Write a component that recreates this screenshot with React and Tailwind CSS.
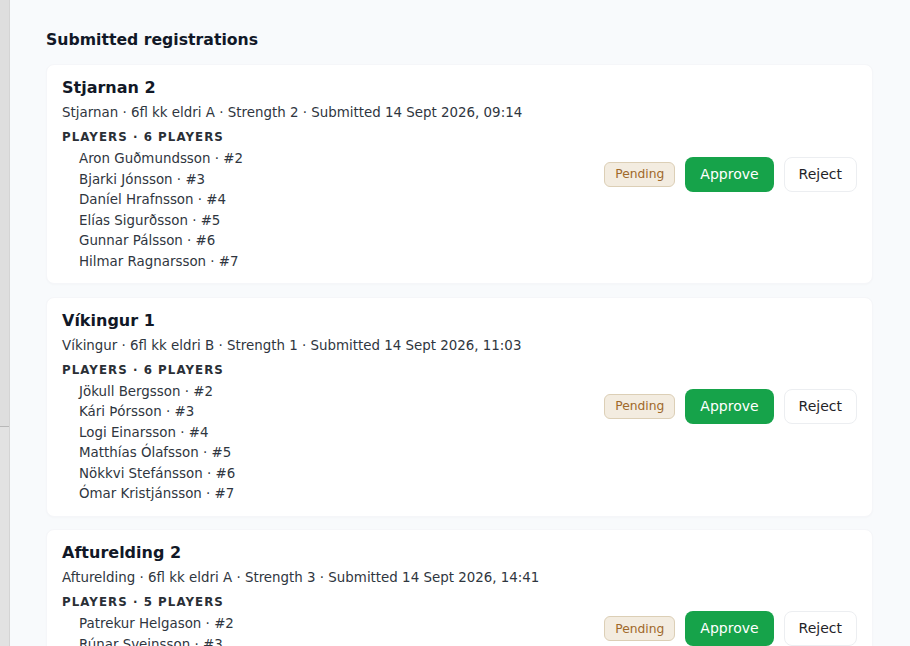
import React from 'react';

const registrations = [
  {
    team: 'Stjarnan 2',
    meta: 'Stjarnan · 6fl kk eldri A · Strength 2 · Submitted 14 Sept 2026, 09:14',
    players: [
      'Aron Guðmundsson · #2',
      'Bjarki Jónsson · #3',
      'Daníel Hrafnsson · #4',
      'Elías Sigurðsson · #5',
      'Gunnar Pálsson · #6',
      'Hilmar Ragnarsson · #7',
    ],
  },
  {
    team: 'Víkingur 1',
    meta: 'Víkingur · 6fl kk eldri B · Strength 1 · Submitted 14 Sept 2026, 11:03',
    players: [
      'Jökull Bergsson · #2',
      'Kári Þórsson · #3',
      'Logi Einarsson · #4',
      'Matthías Ólafsson · #5',
      'Nökkvi Stefánsson · #6',
      'Ómar Kristjánsson · #7',
    ],
  },
  {
    team: 'Afturelding 2',
    meta: 'Afturelding · 6fl kk eldri A · Strength 3 · Submitted 14 Sept 2026, 14:41',
    players: [
      'Patrekur Helgason · #2',
      'Rúnar Sveinsson · #3',
      'Sindri Arnarsson · #4',
      'Tómas Gíslason · #5',
      'Valur Jóhannsson · #6',
    ],
  },
];

export default function App() {
  return (
    <div className="flex h-[646px] overflow-hidden bg-[#f8fafc] text-[#1f2328] font-['DejaVu_Sans',sans-serif]">
      {/* left edge strip */}
      <div className="w-[10px] shrink-0 bg-[#dedede] border-r border-[#d4d4d4] flex flex-col">
        <div className="h-[427px] border-b border-[#b8b8b8]" />
        <div className="flex-1 bg-[#e2e2e2]" />
      </div>

      <div className="flex-1 pl-[36px] pr-[37px] pt-[29px]">
        <h2 className="text-[15.7px] font-bold leading-[22px] text-[#111827]">Submitted registrations</h2>
        <div className="mt-[13px] flex flex-col gap-[12.5px]">
          {registrations.map((r) => (
            <RegistrationCard key={r.team} {...r} />
          ))}
        </div>
      </div>
    </div>
  );
}

function RegistrationCard({ team, meta, players }) {
  return (
    <div className="bg-white rounded-lg shadow-[0_1px_2px_rgba(15,23,42,0.02)] border border-[#f5f6f9] px-[15px] pt-[11px] pb-[11px] flex items-center gap-4">
      <div className="flex-1">
        <h3 className="text-[16px] font-bold leading-[24px] text-[#111827]">{team}</h3>
        <p className="text-[13.4px] leading-[20px] mt-[3px] text-[#2f3640]">{meta}</p>
        <div className="mt-[6px] text-[11.8px] font-bold uppercase tracking-[0.09em] leading-[16px] text-[#2a2f36]">
          Players · {players.length} players
        </div>
        <ul className="mt-[4px] pl-[17px] text-[13.4px] leading-[20.5px] text-[#2f3640]">
          {players.map((p) => (
            <li key={p}>{p}</li>
          ))}
        </ul>
      </div>
      <div className="flex items-center gap-[10px]">
        <span className="px-[10px] h-[25px] flex items-center rounded-md border border-[#dccfb6] bg-[#f3ece0] text-[12.3px] text-[#a0692a]">
          Pending
        </span>
        <button className="h-[35px] px-[15px] rounded-lg bg-[#16a34a] text-white text-[14px]">Approve</button>
        <button className="h-[35px] px-[14px] rounded-lg bg-white border border-[#eceef1] text-[14px] text-[#1f2328]">
          Reject
        </button>
      </div>
    </div>
  );
}
